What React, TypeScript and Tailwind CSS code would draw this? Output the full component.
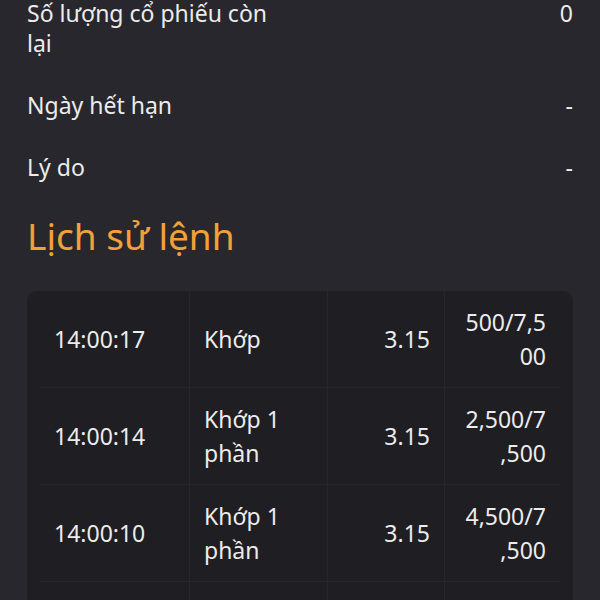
import React from "react";

const info = [
  { label: "Số lượng cổ phiếu còn lại", value: "0" },
  { label: "Ngày hết hạn", value: "-" },
  { label: "Lý do", value: "-" },
];

const rows = [
  { time: "14:00:17", status: "Khớp", price: "3.15", qty: "500/7,500" },
  { time: "14:00:14", status: "Khớp 1 phần", price: "3.15", qty: "2,500/7,500" },
  { time: "14:00:10", status: "Khớp 1 phần", price: "3.15", qty: "4,500/7,500" },
  { time: "14:00:05", status: "Khớp 1 phần", price: "3.15", qty: "6,500/7,500" },
];

export default function App() {
  return (
    <div
      className="h-[600px] w-[600px] overflow-hidden bg-[#28272d] px-[27px] text-[#ececec]"
      style={{ fontFamily: '"Noto Sans", "Open Sans", sans-serif' }}
    >
      <div className="-mt-[18px]">
        {info.map((r) => (
          <div key={r.label} className="flex items-start justify-between py-4 text-[23px] leading-[30px]">
            <div className="w-[252px]">{r.label}</div>
            <div className="text-right">{r.value}</div>
          </div>
        ))}
        <h2 className="mt-[16px] mb-[33px] text-[37px] leading-[44px] font-normal text-[#f2a136]">
          Lịch sử lệnh
        </h2>
        <div className="rounded-[10px] bg-[#1f1e23] px-[13px]">
          <div className="grid grid-cols-[150px_138px_117px_115px] text-[23px] leading-[34px]">
            {rows.map((r) => (
              <React.Fragment key={r.time}>
                <div className="flex items-center border-b border-r border-[#27262b] px-[14px] py-[14px]">
                  {r.time}
                </div>
                <div className="flex items-center border-b border-r border-[#27262b] px-[14px] py-[14px]">
                  {r.status}
                </div>
                <div className="flex items-center justify-end border-b border-r border-[#27262b] px-[14px] py-[14px] text-right">
                  {r.price}
                </div>
                <div className="flex items-center justify-end border-b border-[#27262b] py-[14px] pl-[17px] pr-[14px] text-right">
                  <span className="break-all [line-break:anywhere]">{r.qty}</span>
                </div>
              </React.Fragment>
            ))}
          </div>
        </div>
      </div>
    </div>
  );
}
